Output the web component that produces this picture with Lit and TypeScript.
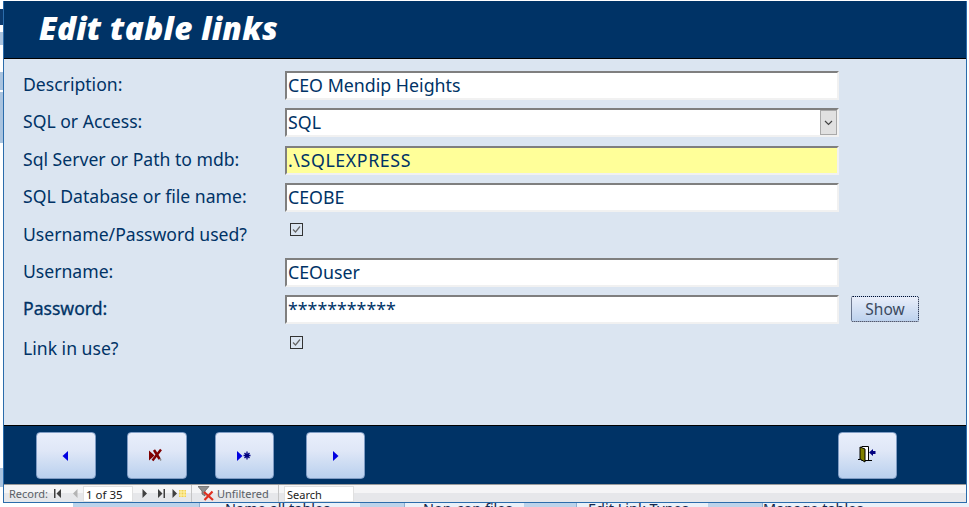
import { LitElement, html, css, svg } from "lit";
import { customElement } from "lit/decorators.js";

const tri = (x: number, y: number, dir: 1 | -1, fill: string, h = 5) =>
  svg`<path d="M${x} ${y - h}L${x + dir * (h + 0.5)} ${y}L${x} ${y + h}Z" fill="${fill}"/>`;

const ICONS = {
  prev: html`<svg width="60" height="48" viewBox="0 0 60 48">${tri(32, 25, -1, "#0000e0")}</svg>`,
  del: html`<svg width="60" height="48" viewBox="0 0 60 48">
    ${tri(22, 24.500, 1, "#800000")}
    <path d="M28 19.500l6 10" stroke="#8a8a8a" stroke-width="1.500" fill="none"/>
    <path d="M27 19l5.500 9M34 18.500l-8.500 11" stroke="#800000" stroke-width="2.400" fill="none"/>
  </svg>`,
  next2: html`<svg width="59" height="48" viewBox="0 0 59 48">
    ${tri(22, 25, 1, "#0000e0")}
    <path d="M32 20.500v8M28.500 24.500h7M29.500 22l5 5M34.500 22l-5 5" stroke="#000080" stroke-width="1.300" fill="none"/>
  </svg>`,
  next: html`<svg width="59" height="48" viewBox="0 0 59 48">${tri(27, 25, 1, "#0000e0")}</svg>`,
  exit: html`<svg width="59" height="48" viewBox="0 0 59 48">
    <path d="M23.500 15.500h7v14h-7" fill="#fff" stroke="#000" stroke-width="1"/>
    <path d="M22 16l5 2v13l-5-3z" fill="#808000" stroke="#000" stroke-width="1"/>
    <path d="M20 28.500h2M27 29.500h7" stroke="#000" stroke-width="1"/>
    <path d="M31 21.500l4-3.500v2h2.500v3H35v2z" fill="#000080"/>
  </svg>`,
};

const BAR = {
  first: html`<svg class="bi" width="8" height="9" viewBox="0 0 8 9"><path d="M0 0h1.500v9H0zM7 0v9L2.500 4.500z" fill="#404040"/></svg>`,
  prev: html`<svg class="bi" width="6" height="9" viewBox="0 0 6 9"><path d="M5.500 0v9L1 4.500z" fill="#b4b4b4"/></svg>`,
  next: html`<svg class="bi" width="6" height="9" viewBox="0 0 6 9"><path d="M0.500 0v9L5 4.500z" fill="#404040"/></svg>`,
  last: html`<svg class="bi" width="8" height="9" viewBox="0 0 8 9"><path d="M6.500 0H8v9H6.500zM1 0v9l4.500-4.500z" fill="#404040"/></svg>`,
  fresh: html`<svg class="bi" width="14" height="9" viewBox="0 0 14 9"><path d="M0.500 0v9L5 4.500z" fill="#404040"/><rect x="7" y="1" width="7" height="7" fill="#f0d050"/><path d="M9 1v7M12 1v7M7 3h7M7 6h7" stroke="#fff3b0" stroke-width="1"/></svg>`,
  filter: html`<svg width="17" height="15" viewBox="0 0 17 15"><path d="M0 0.500h11L7 5v5L4 8V5z" fill="#8f8f8f" stroke="#5c5c5c" stroke-width="0.700"/><path d="M6 6l9 8M14.500 5.500l-8 8.500" stroke="#e03020" stroke-width="2.200" fill="none"/></svg>`,
};

const CHECK = html`<svg width="13" height="13" viewBox="0 0 13 13"><rect x="0.500" y="0.500" width="12" height="12" fill="none" stroke="#333"/><path d="M3 6.500l2.500 2.500L10 3.500" fill="none" stroke="#666" stroke-width="1.200"/></svg>`;

@customElement("app-root")
export class AppRoot extends LitElement {
  static styles = css`
    :host {
      display: block;
      width: 969px;
      height: 507px;
      overflow: hidden;
      background-color: #fff;
      background-image: linear-gradient(to bottom,
        #fff 0 9px, #0b3a6e 9px 25px, #fff 25px 32px, #a9c3df 32px 45px, #fff 45px 72px,
        #a9c3df 72px 90px, #fff 90px 92px, #a9c3df 92px 143px, #fff 143px 468px,
        #a9c3df 468px 487px, #fff 487px);
      background-size: 3px 100%;
      background-repeat: no-repeat;
      font-family: "Noto Sans", sans-serif;
    }
    .win {
      box-sizing: border-box;
      margin: 1px 2px 0 3px;
      width: 964px;
      height: 502px;
      border-left: 1px solid #2b6cab;
      border-right: 1px solid #2b6cab;
      border-bottom: 1px solid #2b6cab;
      display: flex;
      flex-direction: column;
    }
    .head {
      flex: none;
      background: #003366;
      border-bottom: 1px solid #000;
      display: flex;
      align-items: center;
      padding-left: 35px;
      padding-bottom: 5px;
      height: 52px;
    }
    h1 {
      margin: 0;
      color: #fff;
      font: italic 800 31.500px "Open Sans", sans-serif;
      letter-spacing: 0.300px;
      white-space: nowrap;
    }
    .form {
      flex: none;
      height: 366px;
      box-sizing: border-box;
      background: #dbe5f1;
      padding: 12px 0 0 19px;
      display: grid;
      grid-template-columns: 262px 554px 12px 68px;
      grid-auto-rows: 37.400px;
      color: #003366;
      font-size: 17.600px;
    }
    .lbl {
      height: 29px;
      line-height: 27px;
      white-space: nowrap;
      grid-column: 1;
    }
    .low { line-height: 30px; }
    .strong { -webkit-text-stroke: 0.300px #003366; }
    .fld {
      grid-column: 2;
      box-sizing: border-box;
      height: 29px;
      background: #fff;
      border: 2px solid;
      border-color: #7f7f7f #f1f1f1 #f1f1f1 #7f7f7f;
      padding: 0 0 0 1px;
      font-size: 17.800px;
      line-height: 24px;
      white-space: nowrap;
      position: relative;
      color: #003366;
    }
    .yellow { background: #ffff99; letter-spacing: 0.600px; }
    .drop {
      position: absolute;
      right: 0;
      top: 0;
      width: 17px;
      height: 25px;
      box-sizing: border-box;
      background: #e1e1e1;
      border: 1px solid #a9a9a9;
      display: flex;
      align-items: center;
      justify-content: center;
    }
    .chk { grid-column: 2; padding: 2.400px 0 0 5px; height: 16px; line-height: 0; }
    .chk2 { padding-top: 3.400px; }
    .show {
      grid-column: 4;
      box-sizing: border-box;
      height: 26px;
      margin-top: 0.600px;
      border: 1px dotted #000c2a;
      border-radius: 2px;
      background: linear-gradient(#e9eefa, #bdd2ee);
      display: flex;
      align-items: center;
      justify-content: center;
      font-size: 15.500px;
      color: #3b4a60;
    }
    .foot {
      flex: none;
      height: 59px;
      box-sizing: border-box;
      background: #003366;
      border-top: 1px solid #000;
      padding: 6px 69px 0 32px;
      display: flex;
      align-items: flex-start;
    }
    .btn {
      box-sizing: border-box;
      height: 47px;
      width: 60px;
      flex: none;
      border: 1px solid #7f9cc4;
      border-radius: 4px;
      background: linear-gradient(#e9eefb, #dfe7f7 40%, #b9d0ee);
      overflow: hidden;
      display: flex;
      justify-content: center;
    }
    .btn svg { flex: none; margin-top: -2px; }
    .w59 { width: 59px; }
    .g31 { margin-left: 31px; }
    .g28 { margin-left: 28px; }
    .g32 { margin-left: 32px; }
    .end { margin-left: auto; }
    .bar {
      flex: 1;
      min-height: 0;
      box-sizing: border-box;
      display: flex;
      align-items: center;
      background: linear-gradient(#f5f5f6 0 50%, #e6e7ea 50%);
      border-top: 1px solid #9a9a9a;
      font-size: 11px;
      color: #5a5f66;
      padding-left: 5px;
      white-space: nowrap;
    }
    .rec { width: 42px; }
    .bi { flex: none; }
    .m1 { margin-left: 3px; }
    .m2 { margin-left: 10px; }
    .m3 { margin-left: 9px; }
    .m4 { margin-left: 9px; }
    .m5 { margin-left: 7px; }
    .m6 { margin-left: 5px; }
    .inp {
      box-sizing: border-box;
      height: 16px;
      background: #fff;
      color: #1a1a1a;
      line-height: 15px;
      padding-left: 2px;
      border: 1px solid #e0e0e0;
      flex: none;
    }
    .pager { width: 50px; margin-left: 5px; font-size: 11.500px; }
    .sep { width: 1px; align-self: stretch; background: #c4c4c4; flex: none; }
    .filter {
      box-sizing: border-box;
      width: 86px;
      display: flex;
      align-items: center;
      gap: 2px;
      padding-left: 6px;
    }
    .search { width: 70px; margin-left: 5px; }
    .behind {
      display: flex;
      height: 4px;
      overflow: hidden;
      margin-left: 73px;
      font-size: 14.500px;
      color: #14264a;
      line-height: 10px;
      background: #bcd3ea;
    }
    .tab {
      flex: none;
      box-sizing: border-box;
      white-space: nowrap;
    }
    .gap { background: #bcd3ea; }
    .pale { background: #eaf1f9; border-left: 1px solid #8fb0d2; }
    .t0 { width: 126px; }
    .t1 { width: 161px; padding-left: 25px; }
    .t2 { width: 44px; }
    .t3 { width: 120px; padding-left: 18px; }
    .t4 { width: 52px; }
    .t5 { width: 132px; padding-left: 11px; }
    .t6 { width: 54px; }
    .t7 { width: 207px; padding-left: 0; }
  `;

  render() {
    return html`
      <div class="win">
        <div class="head"><h1>Edit table links</h1></div>
        <div class="form">
          <div class="lbl">Description:</div>
          <div class="fld">CEO Mendip Heights</div>
          <div class="lbl">SQL or Access:</div>
          <div class="fld">SQL
            <div class="drop"><svg width="9" height="6" viewBox="0 0 9 6"><path d="M1 1l3.500 3.500L8 1" fill="none" stroke="#444" stroke-width="1.200"/></svg></div>
          </div>
          <div class="lbl">Sql Server or Path to mdb:</div>
          <div class="fld yellow">.\\SQLEXPRESS</div>
          <div class="lbl">SQL Database or file name:</div>
          <div class="fld">CEOBE</div>
          <div class="lbl">Username/Password used?</div>
          <div class="chk">${CHECK}</div>
          <div class="lbl">Username:</div>
          <div class="fld">CEOuser</div>
          <div class="lbl strong">Password:</div>
          <div class="fld">***********</div>
          <div class="show">Show</div>
          <div class="lbl low">Link in use?</div>
          <div class="chk chk2">${CHECK}</div>
        </div>
        <div class="foot">
          <div class="btn">${ICONS.prev}</div>
          <div class="btn g31">${ICONS.del}</div>
          <div class="btn w59 g28">${ICONS.next2}</div>
          <div class="btn w59 g32">${ICONS.next}</div>
          <div class="btn w59 end">${ICONS.exit}</div>
        </div>
        <div class="bar">
          <span class="rec">Record:</span>
          <span class="m1"></span>${BAR.first}
          <span class="m2"></span>${BAR.prev}
          <div class="inp pager">1 of 35</div>
          <span class="m3"></span>${BAR.next}
          <span class="m4"></span>${BAR.last}
          <span class="m5"></span>${BAR.fresh}
          <span class="m6"></span>
          <div class="sep"></div>
          <div class="filter">${BAR.filter}<span>Unfiltered</span></div>
          <div class="sep"></div>
          <div class="inp search">Search</div>
        </div>
      </div>
      <div class="behind">
        <div class="tab gap t0"></div>
        <div class="tab pale t1">Name all tables</div>
        <div class="tab gap t2"></div>
        <div class="tab pale t3">Non-con files</div>
        <div class="tab gap t4"></div>
        <div class="tab pale t5">Edit Link Types</div>
        <div class="tab gap t6"></div>
        <div class="tab pale t7">Manage tables</div>
      </div>
    `;
  }
}
